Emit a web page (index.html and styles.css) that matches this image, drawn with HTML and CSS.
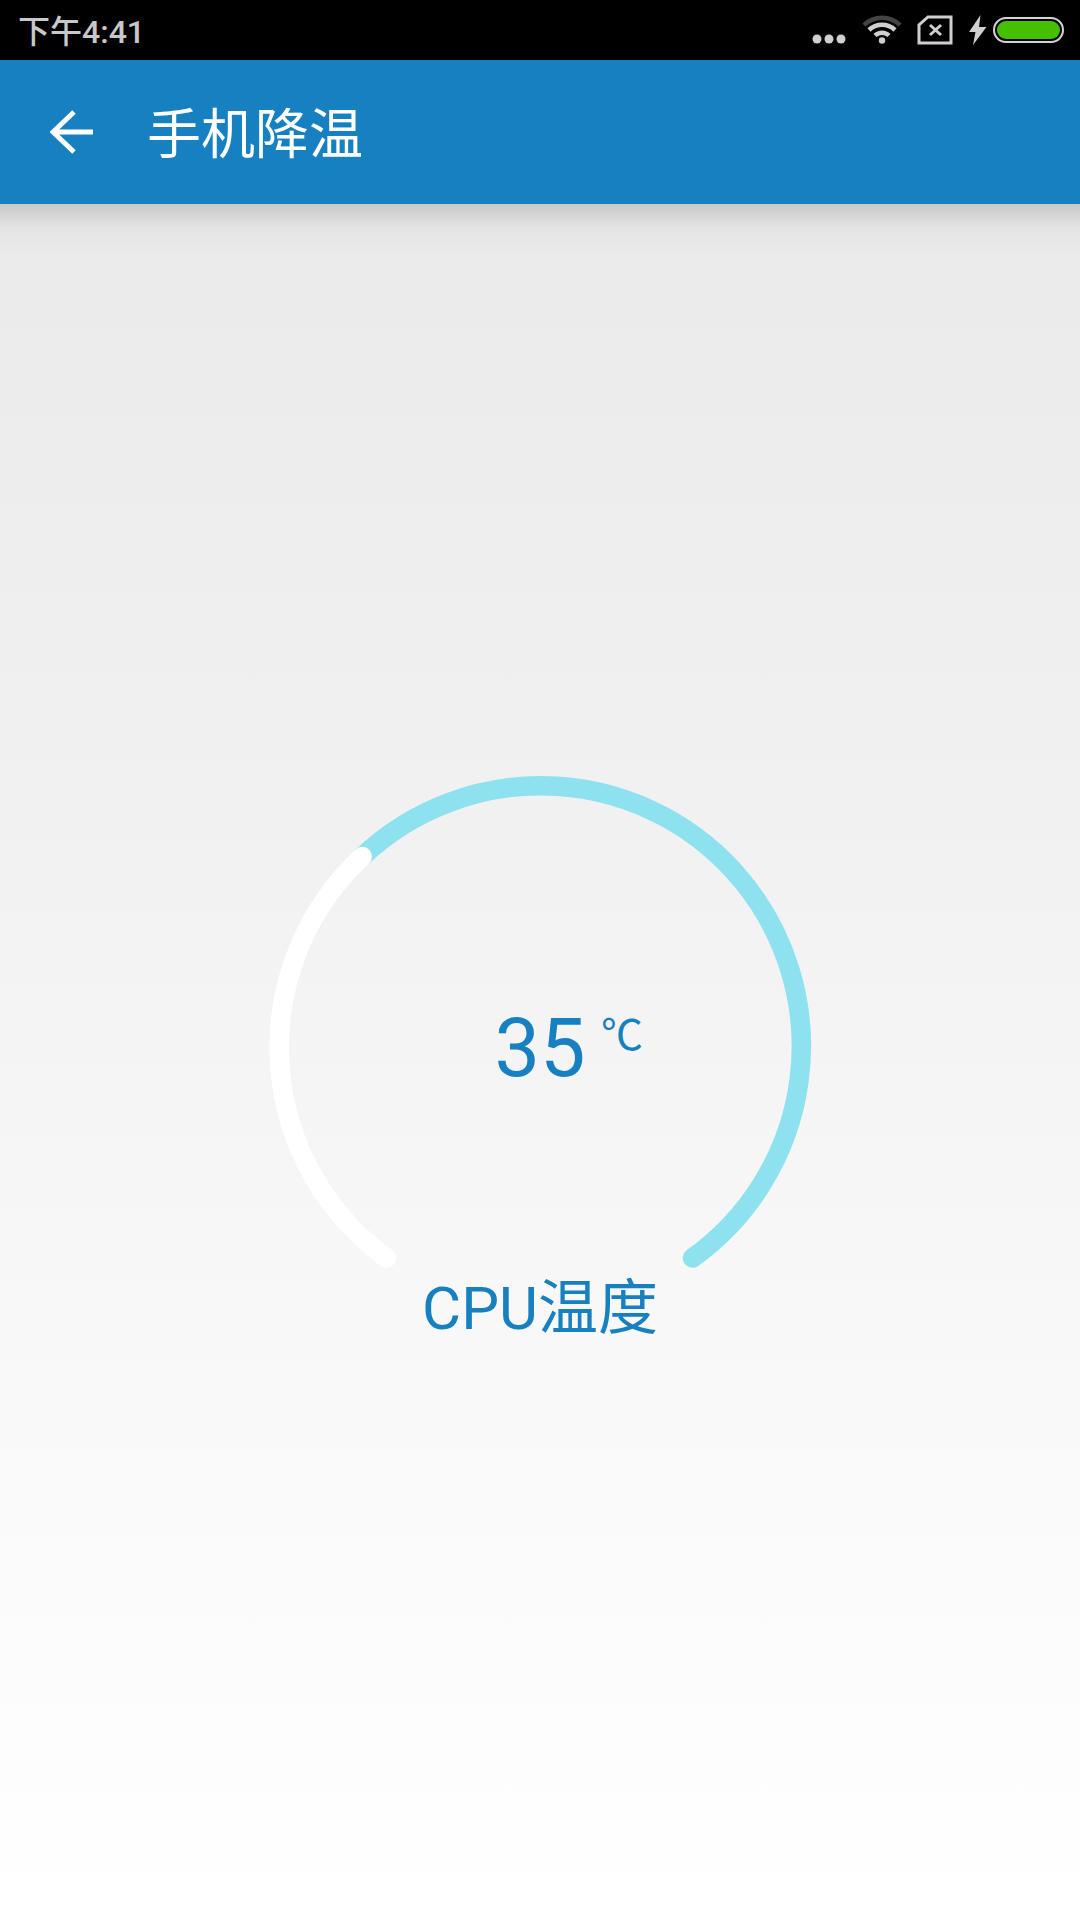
FILE: index.html
```html
<!DOCTYPE html>
<html lang="zh-CN">
<head>
<meta charset="UTF-8">
<meta name="viewport" content="width=device-width, initial-scale=1.0">
<title>手机降温</title>
<link rel="stylesheet" href="styles.css">
</head>
<body>
<div class="screen">
    <div class="status-bar">
        <span class="status-time">下午4:41</span>
        <div class="status-icons">
            <svg class="icon-dots" width="34" height="10" viewBox="0 0 34 10">
                <circle cx="5" cy="5" r="4.5" fill="#cfcfcf"/>
                <circle cx="17" cy="5" r="4.5" fill="#cfcfcf"/>
                <circle cx="29" cy="5" r="4.5" fill="#cfcfcf"/>
            </svg>
            <svg class="icon-wifi" width="40" height="30" viewBox="0 0 40 30">
                <path d="M2 10 A26 26 0 0 1 38 10" fill="none" stroke="#444" stroke-width="4.5"/>
                <path d="M7 15 A19 19 0 0 1 33 15" fill="none" stroke="#cfcfcf" stroke-width="4.5"/>
                <path d="M13 20.5 A10 10 0 0 1 27 20.5" fill="none" stroke="#cfcfcf" stroke-width="4.5"/>
                <circle cx="20" cy="25.5" r="3.2" fill="#cfcfcf"/>
            </svg>
            <svg class="icon-sim" width="36" height="30" viewBox="0 0 36 30">
                <path d="M11 2 H34 V28 H2 V10 Z" fill="none" stroke="#cfcfcf" stroke-width="3"/>
                <path d="M13 10 L24 20 M24 10 L13 20" fill="none" stroke="#cfcfcf" stroke-width="3"/>
            </svg>
            <svg class="icon-bolt" width="18" height="30" viewBox="0 0 18 30">
                <path d="M11.5 0 L0 17 H6.5 L4 30 L17.5 12 H10 Z" fill="#cfcfcf"/>
            </svg>
            <div class="battery"><div class="battery-fill"></div></div>
        </div>
    </div>
    <div class="app-bar">
        <svg class="icon-back" width="44" height="46" viewBox="0 0 44 46">
            <path d="M43 23 H3 M24 3 L3 23 L24 43" fill="none" stroke="#fff" stroke-width="5"/>
        </svg>
        <h1 class="app-title">手机降温</h1>
    </div>
    <div class="content">
        <div class="gauge">
            <svg class="gauge-ring" width="540" height="500" viewBox="0 0 540 500">
                <path class="ring-track" d="M92.2 80.6 A260.5 260.5 0 1 1 422.5 482"/>
                <path class="ring-value" d="M116.5 482 A260.5 260.5 0 0 1 92.2 80.6"/>
            </svg>
            <div class="gauge-value">
                <span class="temp">35</span>
                <span class="temp-unit">℃</span>
            </div>
        </div>
        <div class="gauge-label">CPU温度</div>
    </div>
</div>
</body>
</html>
```
FILE: styles.css
```css
* {
    box-sizing: border-box;
}
html, body {
    margin: 0;
    height: 100%;
}
body {
    font-family: Roboto, "Noto Sans CJK SC", sans-serif;
}
.screen {
    width: 1080px;
    height: 1920px;
    display: flex;
    flex-direction: column;
    overflow: hidden;
}
.status-bar {
    height: 60px;
    flex-shrink: 0;
    background-color: #000;
    display: flex;
    justify-content: space-between;
    align-items: center;
    padding: 0 16px 0 18px;
}
.status-time {
    color: #c8c8c8;
    font-size: 32px;
    font-weight: 500;
    margin-top: -2px;
}
.status-icons {
    display: flex;
    align-items: center;
}
.icon-dots {
    margin: 18px 16px 0 0;
}
.icon-wifi {
    margin-right: 15px;
}
.icon-sim {
    margin-right: 16px;
}
.icon-bolt {
    margin-right: 6px;
}
.battery {
    width: 71px;
    height: 26px;
    border: 2px solid #d4d4d4;
    border-radius: 13px;
    padding: 2px;
    background-color: #000;
}
.battery-fill {
    height: 100%;
    border-radius: 10px;
    background-color: #44c000;
}
.app-bar {
    height: 144px;
    flex-shrink: 0;
    background-color: #1780c0;
    display: flex;
    align-items: center;
    padding-left: 50px;
}
.icon-back {
    margin-right: 53px;
}
.app-title {
    margin: -4px 0 0;
    color: #fff;
    font-size: 54px;
    font-weight: 400;
}
.content {
    flex: 1;
    display: flex;
    flex-direction: column;
    align-items: center;
    padding-top: 572px;
    background:
        linear-gradient(to bottom, #c8c8c8 0, #e4e4e4 24px, rgba(235, 235, 235, 0) 50px),
        linear-gradient(to bottom, #eaeaea 0, #f1f1f1 35%, #f8f8f8 65%, #ffffff 100%);
}
.gauge {
    position: relative;
    width: 540px;
    height: 500px;
}
.gauge-ring {
    display: block;
    overflow: visible;
}
.ring-track, .ring-value {
    fill: none;
    stroke-width: 19.5;
    stroke-linecap: round;
}
.ring-track {
    stroke: #8ee2f0;
}
.ring-value {
    stroke: #fff;
}
.gauge-value {
    position: absolute;
    left: 0;
    right: 0;
    top: 228px;
    text-align: center;
    color: #1780c0;
}
.temp {
    font-size: 81px;
    line-height: 90px;
}
.temp-unit {
    position: absolute;
    top: 7px;
    left: 331px;
    font-size: 42px;
    line-height: 50px;
}
.gauge-label {
    color: #1780c0;
    font-size: 60px;
    line-height: 70px;
    margin-top: -2px;
}
```
